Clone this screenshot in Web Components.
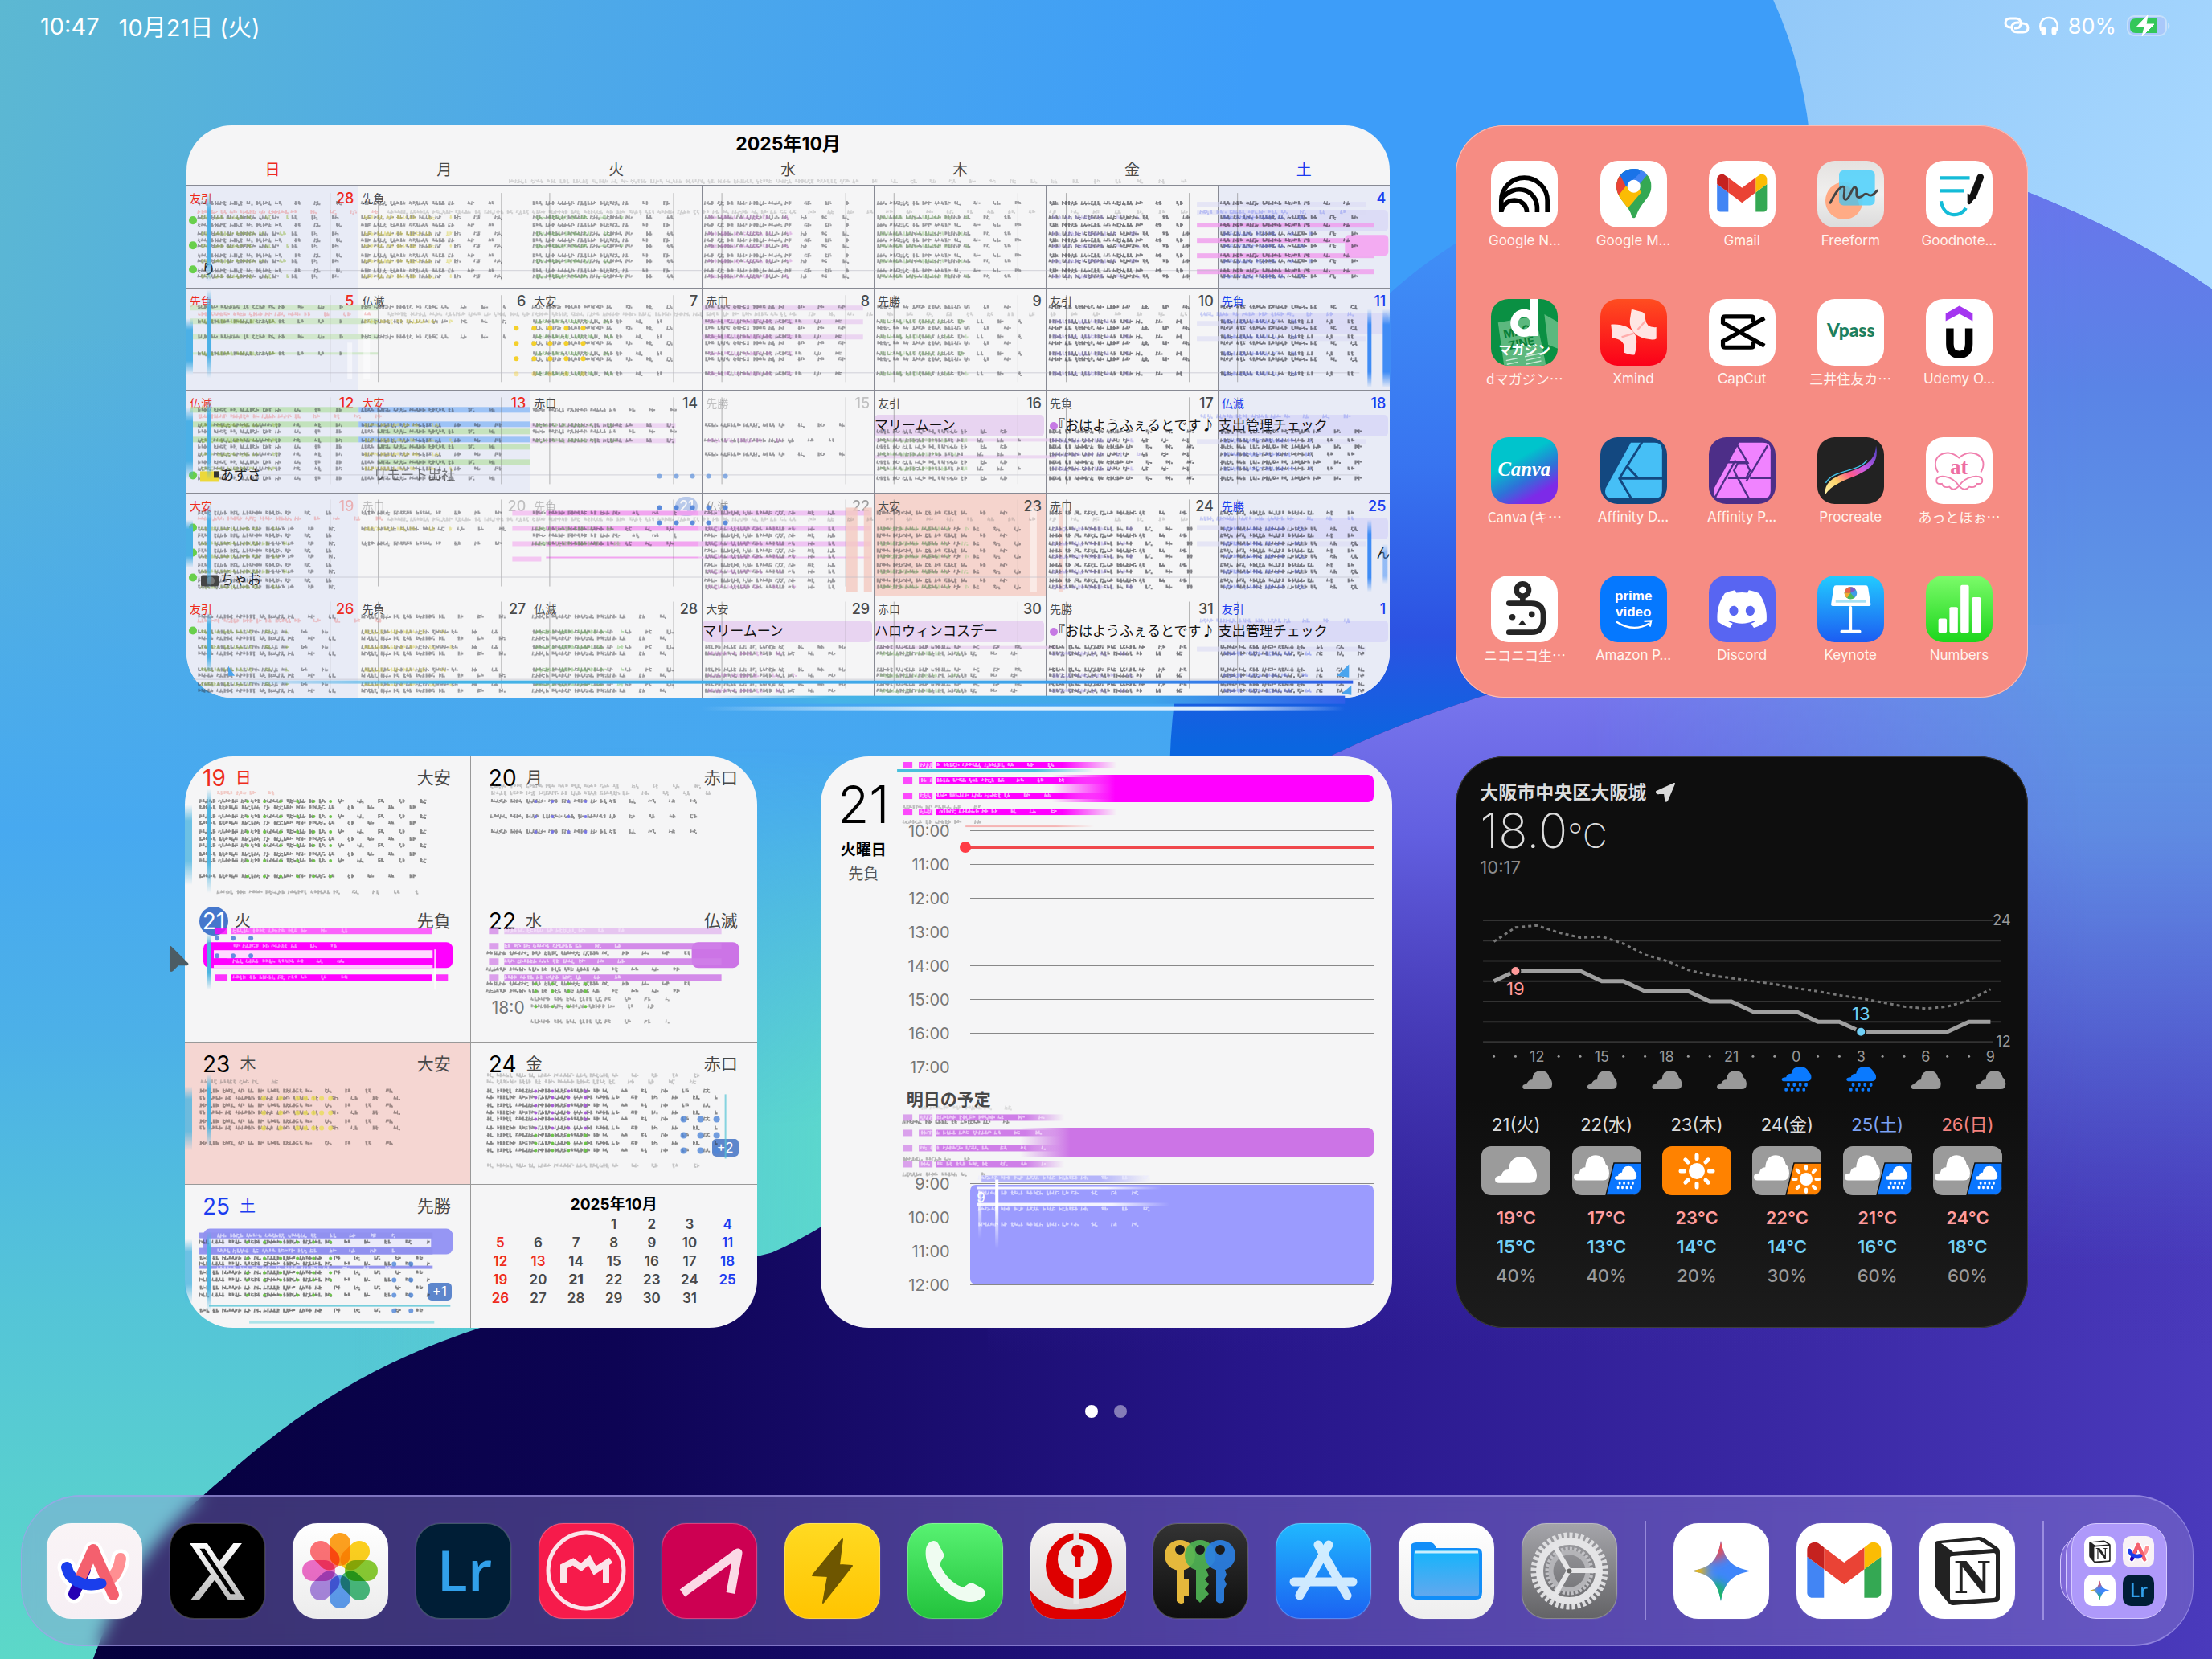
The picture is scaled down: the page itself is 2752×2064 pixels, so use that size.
<!DOCTYPE html>
<html lang="ja">
<head>
<meta charset="utf-8">
<meta name="viewport" content="width=device-width, initial-scale=1">
<title>Home Screen</title>
<style>
	html, body { margin: 0; height: 100%; }
	body {
		font-family: Inter, "Noto Sans CJK JP", sans-serif;
		color: #fff;
		background: #2c1a8a;
	}
</style>
</head>
<body>
<home-screen></home-screen>

<script>
// attach an open shadow root and fill it from a template
function shadow(host, html) {
	const template = document.createElement('template');
	template.innerHTML = html;
	const root = host.attachShadow({mode: 'open'});
	root.appendChild(template.content.cloneNode(true));
	return root;
}

// small seeded generator, so that the marks are the same on each load
function seeded(seed) {
	return () => {
		seed = (seed * 1664525 + 1013904223) % 4294967296;
		return seed / 4294967296;
	};
}

/* ---------- smudged lines ---------- */

// one smudged line of writing: dense at the start, thinner to the end
function smudge(rand, x0, x1, y) {
	let d = '';
	let x = x0;
	while (x < x1) {
		const t = (x - x0) / (x1 - x0);
		const count = t < 0.5 ? 2 + Math.floor(rand() * 5) : 2;
		for (let i = 0; i < count && x < x1; i++) {
			// one upright, one level and one loose stroke for each letter
			const a = (x + rand()).toFixed(1);
			const b = (x + rand()).toFixed(1);
			const c = (x + 1 + rand() * 2).toFixed(1);
			d += `M${a} ${y - 3}h${1 + Math.round(rand())}v${4 + Math.floor(rand() * 2)}h-2z`;
			d += `M${b} ${(y - 3 + rand() * 4).toFixed(1)}h3v1h-3z`;
			d += `M${c} ${(y - 2 + rand() * 3).toFixed(1)}h2v2h-2z`;
			x += 4;
		}
		x += t < 0.5 ? 4 : 11 + t * 9;
	}
	return d;
}

function block(seed, x0, x1, ys, fill = '#333', opacity = 0.6) {
	// lines of one block repeat the same words
	const d = ys.map((y, i) => smudge(seeded(seed * 31 + (i % 2) * 7), x0, x1, y)).join('');
	return `<path d="${d}" fill="${fill}" opacity="${opacity}"/>`;
}

function bar(x, y, w, h, fill, opacity = 1, rx = 0) {
	return `<rect x="${x}" y="${y}" width="${w}" height="${h}" rx="${rx}" fill="${fill}" opacity="${opacity}"/>`;
}

function dots(xs, ys, r, fill, opacity = 1) {
	return ys.map(y => xs.map(x => `<circle cx="${x}" cy="${y}" r="${r}" fill="${fill}" opacity="${opacity}"/>`).join('')).join('');
}

/* ---------- icons ---------- */

const GMAIL = `
	<path fill="#4285f4" d="M58 108h14V74L52 59v43c0 3.32 2.69 6 6 6"/>
	<path fill="#34a853" d="M120 108h14c3.32 0 6-2.69 6-6V59l-20 15"/>
	<path fill="#fbbc04" d="M120 48v26l20-15v-8c0-7.42-8.47-11.65-14.4-7.2"/>
	<path fill="#ea4335" d="M72 74V48l24 18 24-18v26L96 92"/>
	<path fill="#c5221f" d="M52 51v8l20 15V48l-5.6-4.2c-5.94-4.45-14.4-.22-14.4 7.2"/>`;

const vertical = (a, b) => `linear-gradient(${a}, ${b})`;

// name: [viewBox size, tile background, drawing]
const ICONS = {
	notebook: [175, '#fff', `<g fill="none" stroke="#000" stroke-width="12"><path d="M27 135V105A60 60 0 0 1 148 105V135"/><path d="M29 99C60 58 121 73 121 125V135"/><path d="M27 132C38 90 94 98 94 135"/></g>`],
	maps: [175, '#fff', `<clipPath id="pin"><path d="M88 21A46 46 0 0 1 134 67C134 97 106 108 94 145Q88 157 82 145C78 120 42 100 42 67A46 46 0 0 1 88 21Z"/></clipPath>
		<g clip-path="url(#pin)"><path fill="#34a853" d="M30 10h120v150H30z"/><path fill="#fbbc04" d="M36 95L76 50 108 82 66 132z"/><path fill="#ea4335" d="M30 20L54 36 76 56 46 93 30 90z"/><path fill="#4285f4" d="M90 10h26l6 28-38 46-18-20z"/><path fill="#1a73e8" d="M52 10h50l2 22-36 36-18-33z"/></g><circle cx="88" cy="67" r="17" fill="#fff"/>`],
	gmail: [175, '#fff', `<g transform="translate(-56 -27) scale(1.49)">${GMAIL}</g>`],
	freeform: [175, 'linear-gradient(#e4e2e0, #f0efee 50%, #dcdcdc)', `<circle cx="70" cy="105" r="49" fill="#ffab85"/><rect x="57" y="25" width="94" height="92" rx="12" fill="#58d2fb" opacity=".92"/><path d="M57 65Q100 60 110 117H70Q57 117 57 105z" fill="#8b9aa0" opacity=".35"/><path d="M34 110C50 78 62 66 69 68C76 72 64 100 74 102C86 102 90 66 100 70C108 74 96 96 110 96C124 94 120 82 132 88C142 96 150 86 157 78" fill="none" stroke="#444" stroke-width="6" stroke-linecap="round"/>`],
	goodnotes: [175, '#fff', `<g fill="none" stroke="#14bcd8" stroke-width="9"><path d="M36 45H115M36 79H100M40 106C45 150 92 150 105 124"/></g><path d="M143 43L124 92" stroke="#111" stroke-width="18" stroke-linecap="round"/><path d="M109 86L132 94 116 114Q108 116 109 106z" fill="#111"/>`],
	dmagazine: [175, '#0a9043', `<g transform="rotate(-12 90 110)"><path fill="#5cb87e" d="M30 48L130 52V190H20z"/><g font-weight="700" font-size="30" fill="#0a8038"><text x="38" y="92">MAGA</text><text x="44" y="124">ZINE</text></g><path d="M30 150H60M30 160H60M80 150H120M80 160H120M80 170H120" stroke="#cde8d6" stroke-width="3"/></g><path d="M140 40L175 60V130L150 120z" fill="#5cb87e"/><circle cx="87" cy="63" r="26" fill="none" stroke="#fff" stroke-width="20"/><path d="M103 0H124V97H103z" fill="#fff"/><text x="88" y="146" font-size="34" font-weight="700" text-anchor="middle" fill="#fff">マガジン</text>`],
	xmind: [175, vertical('#ff4d20', '#fb0019'), `<g fill="#fff"><path d="M82 27L110 34Q118 36 118 52Q120 76 147 74V104Q142 108 132 106C100 104 74 86 78 52z" opacity=".88"/><path d="M28 67C60 64 94 78 95 108Q96 128 90 146Q80 148 61 140C68 116 54 104 32 103z" opacity=".88"/></g><path d="M98 80L118 58M56 100L88 90" stroke="#f77" stroke-width="5" opacity=".5"/>`],
	capcut: [175, '#fff', `<path d="M117 60V52Q117 46 111 46H43Q37 46 37 52V62L146 123M117 112V121Q117 127 111 127H43Q37 127 37 121V111L146 50" fill="none" stroke="#000" stroke-width="11"/>`],
	vpass: [175, '#fff', `<text x="88" y="100" font-family="Lato, sans-serif" font-size="48" font-weight="900" text-anchor="middle" fill="#1c8060">Vpass</text>`],
	udemy: [175, '#fff', `<path d="M52 38L88 18 123 38V58L88 39 52 58z" fill="#a435f0"/><path d="M63 77V118Q63 146 88 146Q113 146 113 118V77" fill="none" stroke="#000" stroke-width="20"/>`],
	canva: [175, 'linear-gradient(150deg, #00c4cc 35%, #2e72d8 60%, #7d2ae8 80%)', `<text x="87" y="102" font-family="'Liberation Serif', serif" font-style="italic" font-weight="700" font-size="52" text-anchor="middle" fill="#fff">Canva</text>`],
	designer: [175, '#134880', `<path d="M80 14H142Q162 14 162 34V140Q162 160 142 160H30Q8 158 14 134z" fill="#46bff6"/><path d="M110 12L50 108L82 162M50 108H164M70 76L98 106" fill="none" stroke="#134880" stroke-width="6"/>`],
	photo: [175, '#4d2e88', `<path d="M80 14H142Q162 14 162 34V140Q162 160 142 160H30Q8 158 14 134z" fill="#f083ff"/><path d="M73 18L104 70M154 22L98 116M12 166L70 60M44 66H98M108 107H164M68 92L106 162M50 107H76" fill="none" stroke="#4d2e88" stroke-width="5"/><path d="M76 68H98L108 87 98 107H76L66 87z" fill="#f083ff" stroke="#4d2e88" stroke-width="5"/>`],
	procreate: [175, '#222', `<linearGradient id="g" x1="0" y1="1" x2="1" y2="0"><stop offset="0" stop-color="#fff6b0"/><stop offset=".25" stop-color="#fdd36a"/><stop offset=".45" stop-color="#ff5a8a"/><stop offset=".65" stop-color="#c85be8"/><stop offset="1" stop-color="#4a3fc0"/></linearGradient><path d="M20 152C14 74 150 110 154 22C172 110 50 96 20 152z" fill="url(#g)"/><path d="M22 120C40 84 110 92 130 60" fill="none" stroke="#3fc0e8" stroke-width="3"/>`],
	atto: [175, '#fff', `<g fill="none" stroke="#f07fae" stroke-width="4"><path d="M32 92C8 55 50 22 87 54C124 22 168 55 144 92"/><path d="M87 128C70 100 30 96 28 112Q26 124 42 122Q46 134 62 130Q72 144 87 128C104 100 146 96 148 112Q150 124 134 122Q130 134 114 130Q102 144 87 128z"/></g><text x="87" y="98" font-family="'Liberation Serif', serif" font-weight="700" font-size="56" text-anchor="middle" fill="#ee6ea2">at</text>`],
	niconico: [175, '#fff', `<g fill="none" stroke="#252525" stroke-width="14"><circle cx="83" cy="38" r="16"/><path d="M83 54V72"/><path d="M47 73H106Q137 73 137 104V116Q137 149 106 149H47" stroke-linecap="round"/></g><g fill="#252525"><circle cx="56" cy="109" r="8"/><circle cx="107" cy="102" r="8"/><path d="M82 116L92 129H72z"/></g>`],
	prime: [175, '#0578ff', `<g font-family="'Liberation Sans', sans-serif" font-weight="700" font-size="36" text-anchor="middle" fill="#fff"><text x="87" y="65">prime</text><text x="87" y="107">video</text></g><path d="M42 121Q86 150 128 126M115 120L133 119 130 134" fill="none" stroke="#fff" stroke-width="5"/>`],
	discord: [175, '#5865f2', `<path transform="translate(22 23) scale(5.4)" fill="#fff" d="M20.317 4.37a19.79 19.79 0 00-4.885-1.515.074.074 0 00-.079.037c-.21.375-.444.865-.608 1.25-1.845-.276-3.68-.276-5.487 0-.164-.394-.406-.875-.618-1.25a.077.077 0 00-.078-.037 19.736 19.736 0 00-4.885 1.515.07.07 0 00-.033.028C.533 9.046-.319 13.58.1 18.058a.082.082 0 00.031.056c2.053 1.508 4.041 2.423 5.993 3.03a.078.078 0 00.084-.028c.462-.63.873-1.295 1.226-1.994a.076.076 0 00-.042-.106c-.652-.248-1.274-.55-1.872-.892a.077.077 0 01-.007-.128c.126-.094.252-.192.372-.291a.074.074 0 01.077-.01c3.928 1.793 8.18 1.793 12.061 0a.074.074 0 01.079.009c.12.1.246.198.373.293a.077.077 0 01-.007.127 12.3 12.3 0 01-1.873.892.077.077 0 00-.04.106c.36.698.772 1.363 1.225 1.993a.076.076 0 00.084.029c1.961-.607 3.95-1.522 6.002-3.03a.077.077 0 00.032-.055c.5-5.177-.839-9.674-3.549-13.66a.061.061 0 00-.031-.029zM8.02 15.331c-1.183 0-2.157-1.086-2.157-2.419 0-1.333.956-2.419 2.157-2.419 1.21 0 2.176 1.095 2.157 2.419 0 1.333-.956 2.419-2.157 2.419zm7.975 0c-1.183 0-2.157-1.086-2.157-2.419 0-1.333.955-2.419 2.157-2.419 1.21 0 2.176 1.095 2.157 2.419 0 1.333-.946 2.419-2.157 2.419z"/>`],
	keynote: [175, vertical('#22ccff', '#1c5cf2'), `<path d="M49 26H127Q132 26 133 31L140 76Q140 80 136 80H40Q36 80 36 76L43 31Q44 26 49 26z" fill="#fff"/><path d="M48 68H128" stroke="#a8e2f4" stroke-width="6"/><path d="M87 84V145M64 147H111" stroke="#fff" stroke-width="8" stroke-linecap="round"/><circle cx="87" cy="46" r="16" fill="#4cb85c"/><path d="M87 46V30A16 16 0 0 1 101 38z" fill="#7a5ac8"/><path d="M87 46V30A16 16 0 0 0 71 46z" fill="#e8634a"/><path d="M87 46L101 38A16 16 0 0 1 98 58z" fill="#3f9ce8"/><path d="M87 46H71A16 16 0 0 0 78 59z" fill="#f0a830"/>`],
	numbers: [175, vertical('#7cfb6a', '#1cd61c'), `<g fill="#fff"><rect x="33" y="113" width="22" height="37" rx="4"/><rect x="62" y="83" width="22" height="67" rx="4"/><rect x="91" y="25" width="22" height="125" rx="4"/><rect x="121" y="57" width="23" height="93" rx="4"/></g>`],

	arc: [119, vertical('#faf4f6', '#f6eff4'), `<g fill="none" stroke-linecap="round" stroke-linejoin="round"><path d="M34 88L58 34L83 89M25 55C30 85 86 85 92 44" stroke="#fff" stroke-width="23"/><path d="M34 88L48 58" stroke="#2500b4" stroke-width="14"/><path d="M60 76Q88 74 92 44" stroke="#ff8f92" stroke-width="14"/><path d="M25 55C28 70 44 80 66 75" stroke="#1a3eec" stroke-width="14"/><path d="M44 64L58 33L83 89" stroke="#f4606e" stroke-width="14"/><path d="M38 72Q52 80 68 75" stroke="#1a3eec" stroke-width="13"/></g>`],
	x: [119, '#000', `<linearGradient id="g" x2="0" y2="1"><stop stop-color="#fff"/><stop offset="1" stop-color="#bbb"/></linearGradient><path transform="translate(21 17) scale(3.2 3.6)" fill="url(#g)" d="M18.244 2.25h3.308l-7.227 8.26 8.502 11.24H16.17l-5.214-6.817L4.99 21.75H1.68l7.73-8.835L1.254 2.25H8.08l4.713 6.231zm-1.161 17.52h1.833L7.084 4.126H5.117z"/>`],
	photos: [119, vertical('#fff', '#ececec'), ['#ff9500', '#ffcc00', '#7ac818', '#2fb46c', '#4a94f4', '#a27ae0', '#f05cc4', '#ff5f64'].map((c, i) => `<rect x="46" y="12" width="26" height="41" rx="13" fill="${c}" opacity=".88" style="mix-blend-mode:multiply" transform="rotate(${i * 45} 59 59)"/>`).join('')],
	lightroom: [119, '#001e36', `<text x="61" y="85" font-family="'Open Sans', sans-serif" font-weight="600" font-size="70" text-anchor="middle" fill="#31a0ea">Lr</text>`],
	meetup: [119, '#f61b4b', `<g fill="none" stroke="#fbe4ea"><circle cx="59" cy="59" r="47" stroke-width="5"/><path d="M31 74V54L43 48L53 55L63 46L70 59L90 46M84 52V74" stroke-width="8"/></g>`],
	slope: [119, '#cd0052', `<path d="M26 87L95 37L86 87" fill="none" stroke="#fbd9e6" stroke-width="11" stroke-linejoin="round"/>`],
	bolt: [119, vertical('#ffda22', '#ffc400'), `<path d="M72 20L68 52 84 53 48 99 54 66 35 65z" fill="#6e5600" stroke="#6e5600" stroke-width="2" stroke-linejoin="round"/>`],
	phone: [119, vertical('#58f272', '#22c23c'), `<path d="M23 32C25 22 34 19 38 25L45 38C47 44 39 47 41 53C46 64 56 75 67 79C73 81 75 72 82 75L93 81C99 85 97 91 92 94C66 112 18 66 23 32z" fill="#effcf1"/>`],
	lock: [119, vertical('#f6f4f4', '#d9d6d6'), `<path d="M0 84C30 122 90 108 119 84V119H0z" fill="#de0000"/><circle cx="60" cy="53" r="41" fill="#de0000"/><circle cx="59" cy="45" r="25" fill="#ecebeb"/><path d="M57 8V25M57 68V100" stroke="#e8e6e6" stroke-width="7"/><circle cx="59" cy="35" r="8" fill="#de0000"/><path d="M59 38V54" stroke="#de0000" stroke-width="7"/>`],
	keys: [119, vertical('#333', '#0e0e0e'), `<g fill="#e5b83c"><circle cx="34" cy="40" r="19"/><path d="M30 55H39V70H45V90H39V99Q34 102 30 97z"/></g><g fill="#50b454" opacity=".92"><circle cx="59" cy="40" r="19"/><path d="M54 55H65L70 65 65 70 70 76 65 82 70 88 59 99 54 94z"/></g><g fill="#2c80e4" opacity=".92"><circle cx="84" cy="40" r="19"/><path d="M79 55H89L92 64 89 70 92 76 89 82V97Q84 102 79 97z"/></g><g fill="#1c1c1c"><circle cx="34" cy="33" r="6"/><circle cx="59" cy="33" r="6"/><circle cx="84" cy="33" r="6"/></g>`],
	appstore: [119, vertical('#20b8fe', '#1b62f2'), `<g stroke="#e4f5ff" stroke-width="11" stroke-linecap="round" opacity=".9"><path d="M66 27L30 90"/><path d="M53 27L89 90"/><path d="M23 73H96"/></g>`],
	files: [119, vertical('#fff', '#eee'), `<linearGradient id="g" x2="0" y2="1"><stop stop-color="#14b4fc"/><stop offset="1" stop-color="#62a8ee"/></linearGradient><path d="M15 30Q15 24 22 24H40Q44 24 47 31H97Q104 31 104 38V86Q104 95 96 95H23Q15 95 15 86z" fill="#128ef8"/><rect x="19" y="34" width="81" height="57" rx="4" fill="url(#g)"/><path d="M20 36H99" stroke="#c9eefe" stroke-width="3"/>`],
	settings: [119, vertical('#a5a5aa', '#636366'), `<g fill="none"><circle cx="59.5" cy="59.5" r="44" stroke="#dedee0" stroke-width="8" stroke-dasharray="4 2.9"/><circle cx="59.5" cy="59.5" r="37" stroke="#e4e4e6" stroke-width="9"/><circle cx="59.5" cy="59.5" r="27" stroke="#c2c2c6" stroke-width="6" stroke-dasharray="3 2.3"/><circle cx="59.5" cy="59.5" r="23" stroke="#b4b4b8" stroke-width="6"/><path d="M59 59H97M59 59L40 27M59 59L40 92" stroke="#e6e6e8" stroke-width="6"/></g><circle cx="59.5" cy="59.5" r="3" fill="#666"/>`],
	gemini: [119, '#fff', `<filter id="b" x="-1" y="-1" width="3" height="3"><feGaussianBlur stdDeviation="7"/></filter><clipPath id="c"><path d="M59 22C63 46 74 56 97 59.5C74 63 63 74 59 97C55 74 46 63 22 59.5C46 56 55 46 59 22z"/></clipPath><g clip-path="url(#c)"><path fill="#3f86fb" d="M0 0h119v119H0z"/><g filter="url(#b)"><circle cx="50" cy="26" r="20" fill="#f4494c"/><circle cx="24" cy="60" r="16" fill="#fbbc04"/><circle cx="50" cy="92" r="19" fill="#18b95c"/></g></g>`],
	gmaildock: [119, '#fff', `<g transform="translate(-41 -20) scale(1.045)">${GMAIL}</g>`],
	notion: [119, '#fff', `<path d="M19 26Q19 22 24 22L74 17Q78 17 81 19L97 30Q100 32 100 36V93Q100 98 95 98L42 102Q38 102 35 98L21 81Q19 78 19 74z" fill="#222"/><path d="M27 25L74 21 92 32 42 36z" fill="#fff"/><path d="M38 43Q38 41 41 41L92 37Q95 37 95 40V90Q95 93 92 93L41 96Q38 96 38 93z" fill="#fff"/><text x="66" y="87" font-family="'Liberation Serif', serif" font-weight="700" font-size="62" text-anchor="middle" fill="#222">N</text>`],
};

class AppIcon extends HTMLElement {
	constructor() {
		super();
		this.root = shadow(this, `
			<style>
			:host { display: block; width: 100%; aspect-ratio: 1; }
			svg {
				display: block;
				width: 100%;
				height: 100%;
				border-radius: 26%;
				font-family: Inter, "Noto Sans CJK JP", sans-serif;
			}
			:host([glass]) svg { box-shadow: inset 0 0 0 1px rgba(255,255,255,.25), 0 0 2px rgba(255,255,255,.2); }
			</style>
			<svg aria-hidden="true"></svg>
		`);
	}

	connectedCallback() {
		const [size, background, art] = ICONS[this.getAttribute('name')];
		const svg = this.root.querySelector('svg');
		svg.setAttribute('viewBox', `0 0 ${size} ${size}`);
		svg.style.background = background;
		svg.innerHTML = art;
	}
}
customElements.define('app-icon', AppIcon);

/* ---------- wallpaper ---------- */

class WallPaper extends HTMLElement {
	constructor() {
		super();
		const orb = 'M829 560C828 400 900 270 985 208C1100 105 1280 80 1437 136Q1510 165 1568 205V620H829z';
		shadow(this, `
			<style>
			:host { position: absolute; inset: 0; overflow: hidden; }
			svg { display: block; width: 100%; height: 100%; }
			</style>
			<svg viewBox="0 0 1568 1176" preserveAspectRatio="none" aria-hidden="true">
				<defs>
					<linearGradient id="sky" x1="0" y1="0" x2=".55" y2=".12"><stop stop-color="#5cb8d2"/><stop offset=".45" stop-color="#4ea9e8"/><stop offset="1" stop-color="#3d9df9"/></linearGradient>
					<linearGradient id="teal" x1="0" y1="0" x2="0" y2="1"><stop offset=".2" stop-color="#47a9f0" stop-opacity="0"/><stop offset=".5" stop-color="#47a9f0"/><stop offset=".62" stop-color="#4cb0e8"/><stop offset=".78" stop-color="#54c4d8"/><stop offset="1" stop-color="#5cd8c8"/></linearGradient>
					<linearGradient id="aqua" x1="250" y1="0" x2="600" y2="0" gradientUnits="userSpaceOnUse"><stop stop-color="#5cd8cc" stop-opacity="0"/><stop offset="1" stop-color="#5cd8cc"/></linearGradient>
					<linearGradient id="aquafade" x2="0" y2="1"><stop stop-color="#000"/><stop offset="1" stop-color="#fff"/></linearGradient>
					<mask id="low"><rect y="530" width="700" height="270" fill="url(#aquafade)"/><rect y="800" width="700" height="376" fill="#fff"/></mask>
					<linearGradient id="pale" x2="1" y2=".6"><stop stop-color="#92c8f8"/><stop offset="1" stop-color="#a8d8ff"/></linearGradient>
					<linearGradient id="orb" x1="0" y1="130" x2="0" y2="530" gradientUnits="userSpaceOnUse"><stop stop-color="#4296f8"/><stop offset=".5" stop-color="#3874f0"/><stop offset=".8" stop-color="#2c52e2"/><stop offset="1" stop-color="#0a66e0"/></linearGradient>
					<linearGradient id="east" x1="0" y1="118" x2="0" y2="900" gradientUnits="userSpaceOnUse"><stop stop-color="#6a74ec"/><stop offset=".2" stop-color="#5a84e6"/><stop offset=".45" stop-color="#5f98e6"/><stop offset=".6" stop-color="#5f90e2" stop-opacity=".9"/><stop offset="1" stop-color="#5070d8" stop-opacity="0"/></linearGradient>
					<linearGradient id="across" x1="1120" y1="0" x2="1480" y2="0" gradientUnits="userSpaceOnUse"><stop stop-color="#000"/><stop offset="1" stop-color="#fff"/></linearGradient>
					<mask id="side"><rect width="1568" height="1176" fill="url(#across)"/></mask>
					<linearGradient id="dark" x1="60" y1="0" x2="1568" y2="0" gradientUnits="userSpaceOnUse"><stop stop-color="#05003c"/><stop offset=".25" stop-color="#0d0454"/><stop offset=".55" stop-color="#27168a"/><stop offset=".8" stop-color="#3a28a4"/><stop offset="1" stop-color="#4a3abc"/></linearGradient>
					<linearGradient id="lilac" x1="0" y1="470" x2="0" y2="960" gradientUnits="userSpaceOnUse"><stop stop-color="#7c7af0"/><stop offset=".25" stop-color="#625fe0"/><stop offset="1" stop-color="#4030b0" stop-opacity="0"/></linearGradient>
				</defs>
				<rect width="1568" height="1176" fill="url(#sky)"/>
				<rect width="1000" height="1176" fill="url(#teal)"/>
				<rect width="700" height="1176" fill="url(#aqua)" mask="url(#low)"/>
				<path d="M1257 0Q1280 50 1284 110L1400 260H1568V0z" fill="url(#pale)"/>
				<path d="${orb}" fill="url(#orb)"/>
				<path d="M1300 100C1350 108 1400 120 1437 136Q1510 165 1568 205V620H1300z" fill="#6274ea"/>
				<path d="M66 1176C90 1110 120 1080 158 1048C200 1010 250 975 313 951C390 922 470 908 547 888C700 820 760 640 945 535Q1060 480 1200 460Q1400 440 1568 440V1176z" fill="url(#dark)"/>
				<path d="M700 740C770 650 840 590 945 535Q1060 480 1200 460Q1400 440 1568 440V960H700z" fill="url(#lilac)"/>
				<path d="M1120 100C1280 90 1350 105 1437 136Q1510 165 1568 205V900H1120z" fill="url(#east)" mask="url(#side)"/>
			</svg>
		`);
	}
}
customElements.define('wall-paper', WallPaper);

/* ---------- status bar ---------- */

class StatusBar extends HTMLElement {
	constructor() {
		super();
		shadow(this, `
			<style>
			:host {
				display: flex;
				justify-content: space-between;
				align-items: center;
				height: 64px;
				padding: 0 52px 0 50px;
				font-weight: 400;
			}
			div { display: flex; align-items: center; gap: 12px; font-size: 27px; }
			div:first-of-type { gap: 24px; font-size: 29px; }
			svg { display: block; }
			</style>
			<div><time>10:47</time><span>10月21日 (火)</span></div>
			<div>
				<svg width="32" height="22" viewBox="0 0 32 22" fill="none" stroke="#fff" stroke-width="3" role="img" aria-label="link"><path d="M9 13C3 13 2 10 2 7.500Q2 2 8 2H15Q21 2 21 8Q21 14 15 14H13"/><path d="M23 8C29 8 30 11 30 13.500Q30 19 24 19H17Q10 19 10 13Q10 7 17 7H19"/></svg>
				<svg width="24" height="24" viewBox="0 0 24 24" fill="none" stroke="#fff" role="img" aria-label="headphones"><path d="M2.500 18C-1 9 4 2 12 2S25 9 21.500 18" stroke-width="2.500"/><path d="M5.500 16.500V20.500M18.500 16.500V20.500" stroke-width="6" stroke-linecap="round"/></svg>
				<span>80%</span>
				<svg width="55" height="28" viewBox="0 0 55 28" role="img" aria-label="battery charging"><rect x="2" y="2" width="48" height="24" rx="8" fill="#a9c8fa" stroke="#c6e0fb" stroke-width="2"/><path d="M5 12Q5 5 12 5H38V23H12Q5 23 5 16z" fill="#34c759"/><path d="M52 10Q57 14 52 18z" fill="#c6e0fb"/><path d="M27 1L13 15.500H23L20 27 35 12H25z" fill="#fff" stroke="#fff" stroke-width="1" stroke-linejoin="round"/></svg>
			</div>
		`);
	}
}
customElements.define('status-bar', StatusBar);

/* ---------- month calendar ---------- */

// [name of day, number, opacity, event colour, event text]
const WEEKS = [
	[['友引', 28], ['先負', ''], ['', ''], ['', ''], ['', ''], ['', ''], ['', 4, 1, '#dcdcf6']],
	[['先負', 5], ['仏滅', 6], ['大安', 7], ['赤口', 8], ['先勝', 9], ['友引', 10], ['先負', 11, 1, '#dcdcf6']],
	[['仏滅', 12], ['大安', 13], ['赤口', 14], ['先勝', 15, .3], ['友引', 16, 1, '#e8d4f1', 'マリームーン'], ['先負', 17, 1, '', '『おはようふぇるとです♪'], ['仏滅', 18, 1, '#dadaf7', '支出管理チェック']],
	[['大安', 19, .3], ['赤口', 20, .3], ['先負', 21, .3], ['仏滅', 22, .5], ['大安', 23], ['赤口', 24], ['先勝', 25, 1, '#dadaf7']],
	[['友引', 26], ['先負', 27], ['仏滅', 28], ['大安', 29, 1, '#e8d4f1', 'マリームーン'], ['赤口', 30, 1, '#e8d4f1', 'ハロウィンコスデー'], ['先勝', 31, 1, '', '『おはようふぇるとです♪'], ['友引', 1, 1, '#dadaf7', '支出管理チェック']],
];

// heights of the smudged lines in each week
const LINES = [
	[97, 115, 124, 135, 143, 150, 162, 169, 181, 188],
	[226, 244, 252, 263, 271, 284, 291, 309],
	[354, 373, 381, 392, 400, 409, 419, 427, 439],
	[482, 502, 510, 520, 529, 536, 547, 555, 566, 574],
	[611, 630, 638, 649, 657, 677, 684, 695, 703],
];

function monthMarks() {
	const col = 1496 / 7;
	const week = 127;
	let art = '';

	// coloured bands
	for (const y of [223, 240, 259, 282]) art += bar(4, y, 234, y === 282 ? 3 : 7, '#cde6c4', .85);
	for (const y of [350, 368, 387]) art += bar(4, y, 210, 7, '#b8e0ae', .8) + bar(214, y, 213, 7, '#8fbcf6', .85);
	for (const y of [377, 396, 415]) art += bar(238, y, 189, 7, '#bfe2b4', .85);
	for (const y of [370, 389]) art += bar(428, y, 180, 6, '#ecd2f2', .9);
	for (const y of [224, 241, 260]) art += bar(641, y, 200, 6, '#e8cdf0', .8);
	for (const y of [479, 498, 517, 536]) {
		art += bar(447, y, 190, y === 536 ? 2 : 6, '#f29cf0', .9);
		art += bar(637, y, 214, y === 536 ? 2 : 6, '#eeb8f2', .8);
		art += bar(405, y, 36, 6, '#f4a8f0', .6);
	}
	for (const y of [389, 410, 647]) art += bar(855, y, 226, 4, '#e8ccf0', .7);
	for (const y of [121, 140, 159, 179]) art += bar(1256, y, 220, 6, '#f09bee', .8);
	art += bar(1440, 136, 54, 26, '#f3abf2', 1, 5);
	for (const y of [95, 105, 243, 262, 390, 497, 517, 648]) art += bar(1256, y, 210, 6, '#dadaf5', .6);
	art += bar(820, 475, 14, 105, '#f4c9c0', .8) + bar(842, 475, 10, 105, '#f4c9c0', .8);
	art += bar(1084, 475, 6, 105, '#f5d4cd', .9) + bar(1049, 475, 8, 105, '#fff', .5);
	art += bar(200, 270, 6, 45, '#fff', .5) + bar(220, 230, 8, 85, '#fff', .5);

	// ghosts of the column rules
	for (let c = 1; c < 7; c++) {
		for (let w = 0; w < 5; w++) {
			art += bar(Math.round(c * col - 36), 84 + w * week, 1, 108, '#777', .55);
			art += bar(Math.round(c * col + 24), 84 + w * week, 1, 108, '#777', .55);
		}
	}
	for (let w = 0; w < 5; w++) art += bar(8, 180 + w * week, 1450, 1, '#b9b9c4', .6);

	// smudged writing, cell by cell
	for (let w = 0; w < 5; w++) {
		for (let c = 0; c < 7; c++) {
			let ys = LINES[w];
			if (c === 1 && (w === 1 || w === 3)) ys = ys.filter((y, i) => [0, 1, 3].includes(i));
			if (c === 0 && w === 1) ys = ys.filter((y, i) => [0, 1, 3, 5].includes(i));
			if (c === 2 && w > 1 && w < 4) ys = ys.slice(0, 4);
			if (c === 3 && w === 2) ys = ys.filter((y, i) => [1, 3, 5].includes(i));
			if (c > 3 && w === 2) ys = ys.slice(2);
			if (c > 2 && w === 4) ys = ys.slice(3);
			const x0 = Math.round(c * col + (c ? 3 : 14));
			art += block(w * 7 + c + 3, x0, x0 + 178, ys, '#303038', c > 4 ? .6 : .45);
			const tint = ['#8fb23a', '#d8cf3c', '#6fb85a', '#c77ad0', '#8fc47a', '#9a8ae0', '#5a6ae8'][c];
			art += block(w * 11 + c + 5, x0 + 4, x0 + 110, ys.filter((y, i) => i % 2), tint, .45);
		}
		art += block(w + 91, 14, 240, [108 + w * week], '#e86a6a', .35);
		art += block(w + 97, 1260, 1460, [108 + w * week], '#5a6af0', .3);
	}
	art += block(141, 400, 1250, [70], '#777', .25) + block(142, 250, 1240, [108, 235, 490], '#666', .25);
	for (const y of [252, 271, 290, 309]) art += dots([410, 432, 452, 472, 493], [y], 3, '#f4d02c', y === 309 ? .4 : 1);
	for (const y of [475, 494]) art += dots([588, 609, 629, 649, 670], [y], 3, '#4a80d8', .9);
	art += dots([588, 609, 629, 649, 670], [436], 3, '#5a8edc', .7);

	// events still to be seen in the first column
	art += dots([8], [118, 149, 179, 435, 500, 531, 562, 628], 5, '#68cf4c');
	art += bar(17, 430, 24, 13, '#ecd83a') + bar(34, 430, 6, 8, '#333');
	art += bar(18, 559, 22, 14, '#444', 1, 2) + '<circle cx="30" cy="566" r="5" fill="#777"/>';
	art += `<g font-size="17" fill="#222"><text x="19" y="185">り</text><text x="42" y="441">あずさ</text><text x="42" y="570">ちゃお</text><text x="232" y="441" opacity=".55">リモート出社</text><text x="1479" y="538">ん</text></g>`;

	// pieces of the wallpaper dragged over the edge
	for (const [y, h] of [[84, 110], [204, 110], [340, 100], [470, 105], [605, 75]]) art += bar(26, y, 5, h, 'url(#left)');
	for (const [y, h] of [[240, 70], [350, 90], [490, 60]]) art += bar(0, y, 8, h, 'url(#left)');
	art += bar(1468, 228, 5, 98, 'url(#right)') + bar(1487, 228, 10, 98, 'url(#right)');
	art += bar(1468, 490, 5, 90, 'url(#right)') + bar(1487, 520, 6, 50, 'url(#right)', .5);
	art += bar(40, 690, 1410, 4, 'url(#foot)') + bar(640, 709, 800, 10, 'url(#foot)') + bar(640, 722, 800, 5, 'url(#haze)');
	art += '<path d="M52 672v12h8zM1430 684l15-14v16zM1436 706l12-10v12z" fill="#4aa4ee"/>';
	return `<defs>
		<linearGradient id="left" x2="0" y2="1"><stop stop-color="#4bb0e6" stop-opacity="0"/><stop offset=".2" stop-color="#4bb0e6"/><stop offset=".75" stop-color="#4bb0e6"/><stop offset="1" stop-color="#4bb0e6" stop-opacity="0"/></linearGradient>
		<linearGradient id="right" x2="0" y2="1"><stop stop-color="#3f8cf5" stop-opacity="0"/><stop offset=".2" stop-color="#3f8cf5"/><stop offset=".8" stop-color="#3f8cf5"/><stop offset="1" stop-color="#3f8cf5" stop-opacity="0"/></linearGradient>
		<linearGradient id="foot"><stop stop-color="#46a8ea" stop-opacity="0"/><stop offset=".2" stop-color="#46b4e6"/><stop offset=".7" stop-color="#3fa4ea"/><stop offset="1" stop-color="#2f5ee8"/></linearGradient>
		<linearGradient id="haze"><stop stop-color="#fff" stop-opacity="0"/><stop offset=".4" stop-color="#dff0fc"/><stop offset=".8" stop-color="#dff0fc"/><stop offset="1" stop-color="#fff" stop-opacity="0"/></linearGradient>
	</defs>${art}`;
}

class MonthCalendar extends HTMLElement {
	constructor() {
		super();
		const names = ['日', '月', '火', '水', '木', '金', '土'];
		const cell = ([name, number, opacity = 1, color = '', text = '']) => {
			const day = number === 21 ? '<b class="today">21</b>' : number;
			const dot = text && !color ? '<i></i>' : '';
			const event = color || text ? `<p style="background:${color || 'none'}">${dot}${text}</p>` : '';
			return `<td><div class="top"><span style="opacity:${number === 19 ? 1 : opacity}">${name}</span><span class="num" style="opacity:${opacity}">${day}</span></div>${event}</td>`;
		};
		shadow(this, `
			<style>
			:host {
				display: flex;
				flex-direction: column;
				position: relative;
				border-radius: 56px;
				background: #f5f5f6;
				color: #4a4a4a;
			}
			h2 {
				margin: 0;
				padding-top: 8px;
				font-size: 23px;
				line-height: 30px;
				font-weight: 700;
				text-align: center;
				color: #000;
			}
			.sheet {
				flex: 1;
				min-height: 0;
				display: flex;
				overflow: hidden;
				border-radius: 0 0 56px 56px;
			}
			table { flex: 1; width: 100%; height: 100%; border-collapse: collapse; table-layout: fixed; }
			th { height: 36px; padding: 0; font-size: 19px; line-height: 36px; font-weight: 400; vertical-align: top; }
			td { padding: 0; vertical-align: top; border-top: 1px solid #888a94; border-left: 1px solid #888a94; }
			td:first-child { border-left: 0; }
			th:first-child, td:first-child { color: #ee2c1c; }
			th:last-child, td:last-child { color: #1a3cf0; }
			td:first-child, td:last-child { background: #e8ebf6; }
			tr:nth-child(3) td:nth-child(2) { background: #e8ebf6; color: #ee2c1c; }
			tr:nth-child(4) td:nth-child(5) { background: #f5d4cd; }
			.top {
				display: flex;
				justify-content: space-between;
				padding: 4px 5px 0 4px;
				font-size: 14px;
				line-height: 24px;
			}
			.num { font-size: 18px; font-weight: 500; }
			.today {
				display: block;
				width: 28px;
				border-radius: 14px;
				background: #2f66d0;
				color: #fff;
				text-align: center;
				font-weight: 500;
			}
			p {
				margin: 2px 2px 0 0;
				height: 27px;
				border-radius: 5px;
				font-size: 17px;
				line-height: 27px;
				color: #111;
				white-space: nowrap;
				overflow: hidden;
			}
			i {
				display: inline-block;
				width: 10px;
				height: 10px;
				margin: 0 -8px 0 4px;
				border-radius: 5px;
				background: #c679e4;
			}
			svg { position: absolute; left: 0; top: 0; width: 100%; height: 100%; overflow: visible; }
			</style>
			<h2>2025年10月</h2>
			<div class="sheet">
				<table>
					<thead><tr>${names.map(n => `<th scope="col">${n}</th>`).join('')}</tr></thead>
					<tbody>${WEEKS.map(w => `<tr>${w.map(cell).join('')}</tr>`).join('')}</tbody>
				</table>
			</div>
			<svg viewBox="0 0 1496 711" aria-hidden="true">${monthMarks()}</svg>
		`);
	}
}
customElements.define('month-calendar', MonthCalendar);

/* ---------- folder of apps ---------- */

const APPS = [
	['notebook', 'Google N…'], ['maps', 'Google M…'], ['gmail', 'Gmail'], ['freeform', 'Freeform'], ['goodnotes', 'Goodnote…'],
	['dmagazine', 'dマガジン…', 'ja'], ['xmind', 'Xmind'], ['capcut', 'CapCut'], ['vpass', '三井住友カ…', 'ja'], ['udemy', 'Udemy O…'],
	['canva', 'Canva (キ…', 'ja'], ['designer', 'Affinity D…'], ['photo', 'Affinity P…'], ['procreate', 'Procreate'], ['atto', 'あっとほぉ…', 'ja'],
	['niconico', 'ニコニコ生…', 'ja'], ['prime', 'Amazon P…'], ['discord', 'Discord'], ['keynote', 'Keynote'], ['numbers', 'Numbers'],
];

class AppTile extends HTMLElement {
	constructor() {
		super();
		this.attachShadow({mode: 'open'});
	}

	connectedCallback() {
		this.shadowRoot.innerHTML = `
			<style>
			:host { display: block; }
			:host([lang=ja]) { font-family: "Noto Sans CJK JP", sans-serif; }
			button {
				display: flex;
				flex-direction: column;
				align-items: center;
				gap: 5px;
				width: 100%;
				padding: 0;
				border: 0;
				background: none;
				color: inherit;
				font: inherit;
				font-size: 17px;
				line-height: 22px;
				white-space: nowrap;
			}
			app-icon { width: 83px; }
			</style>
			<button type="button"><app-icon name="${this.getAttribute('icon')}"></app-icon><slot></slot></button>
		`;
	}
}
customElements.define('app-tile', AppTile);

class AppFolder extends HTMLElement {
	constructor() {
		super();
		shadow(this, `
			<style>
			:host {
				display: grid;
				box-sizing: border-box;
				grid-template-columns: repeat(5, 1fr);
				grid-auto-rows: 172px;
				padding: 44px 18px 0;
				border-radius: 60px;
				background: #f68c83;
				box-shadow: inset 0 0 0 1px #f9bfb8;
				color: #fff4ee;
				min-height: 0;
			}
			app-tile { height: 120px; }
			</style>
			${APPS.map(([icon, name, lang = 'en']) => `<app-tile lang="${lang}" icon="${icon}">${name}</app-tile>`).join('')}
		`);
	}
}
customElements.define('app-folder', AppFolder);

/* ---------- week calendar ---------- */

function weekMarks() {
	let art = '';
	const greens = [78, 99, 119, 140, 160, 181];

	// 19 and 20
	art += block(201, 18, 300, [56, 64, 75, 83, 94, 103, 111, 122, 130, 149], '#303030', .55);
	art += block(207, 40, 290, [169], '#555', .4) + block(209, 40, 120, [46], '#e86a5a', .3);
	art += dots(greens, [56, 75, 94, 111, 130, 149], 2, '#6fc44c');
	art += block(211, 380, 653, [56, 75, 94], '#303030', .5) + block(213, 380, 653, [37, 46], '#555', .3);
	art += dots([436, 457, 477, 498], [56, 75, 94], 2, '#7a78e8');

	// 21
	art += bar(23, 231, 310, 32, '#ff00ff', 1, 8) + bar(36, 241, 272, 10, '#fff', .85) + bar(36, 259, 272, 4, '#fff', .8);
	for (const y of [213, 232, 251, 271]) {
		art += bar(37, y, 16, 8, '#ff00ff', .8) + bar(57, y, 250, 8, '#ff00ff', y === 213 ? .6 : 1);
		art += block(y, 60, 200, [y + 4], '#ffd4ff', .6);
	}
	art += dots([40, 60, 82], [226, 248], 3, '#3f74d8', .8) + bar(310, 240, 2, 50, '#fff', .8) + bar(312, 271, 15, 8, '#ff00ff', .8);

	// 22
	art += bar(630, 231, 59, 32, '#cc74e6', 1, 8);
	for (const y of [213, 232, 251, 271]) {
		art += bar(378, y, 12, 8, '#d48ae8', .8) + bar(397, y, 270, 8, '#cf7ee8', y === 213 ? .4 : .9);
		art += block(y + 3, 397, 560, [y + 4], '#f4e0fa', .8);
	}
	art += block(221, 375, 630, [245, 265, 283, 292], '#303030', .5) + block(227, 430, 600, [302, 311, 330], '#303030', .4);
	art += dots([436, 457, 477, 498], [283, 292, 311], 2, '#6fc44c');

	// 23
	art += block(231, 18, 270, [416, 425, 434, 443, 454, 462, 481], '#463a38', .5) + block(233, 20, 130, [405], '#555', .35);
	art += dots([98, 119, 140, 150, 160, 170, 181], [425, 443, 462], 3, '#eadc5a', .8);

	// 24
	art += block(241, 375, 660, [416, 424, 434, 443, 451, 462, 471, 481, 490], '#303030', .55) + block(243, 375, 650, [397, 405, 509], '#555', .3);
	art += dots([436, 457, 477, 498], [416, 424, 434, 443, 451, 462], 2, '#a860d8') + dots([436, 457, 477, 498], [471, 481, 490], 2, '#6fc44c');
	art += dots([620, 641, 661], [451, 471, 490], 4, '#4f86d8', .8);

	// 25
	art += bar(23, 587, 310, 32, '#9696f4', 1, 8) + bar(30, 599, 276, 11, '#f4f4fb', .9);
	for (const [y, h] of [[592, 7], [611, 8], [633, 4]]) {
		art += bar(18, y, 290, h, '#9090ee', .95) + block(y, 40, 260, [y + 4], '#e8e8ff', .7);
	}
	art += block(251, 18, 305, [604, 624, 631, 642, 651, 661, 670, 689], '#303030', .6);
	art += dots(greens, [604, 624, 642, 651, 670], 2, '#6fc44c') + dots([260, 281], [631, 651, 670, 689], 3, '#4f86d8', .8);

	// wallpaper dragged over the edge
	for (const [y, h] of [[40, 130], [220, 70], [395, 90], [590, 100]]) art += bar(28, y, 4, h, 'url(#left)');
	for (const [y, h] of [[60, 100], [410, 80], [600, 80]]) art += bar(0, y, 9, h, 'url(#left)', .8);
	art += bar(30, 682, 300, 2, '#56c4d6', .8) + bar(80, 702, 230, 3, '#8fdce4', .7) + bar(671, 420, 2, 80, '#56c4d6', .7);
	art += '<path d="M-17 236Q-19 235 -19 240V265Q-19 269 -15 267L-8 260 3 260Q6 258 3 256z" fill="#4c5c64"/>';
	return `<defs><linearGradient id="left" x2="0" y2="1"><stop stop-color="#4bb4e0" stop-opacity="0"/><stop offset=".2" stop-color="#4bb4e0"/><stop offset=".7" stop-color="#4bb4e0"/><stop offset="1" stop-color="#4bb4e0" stop-opacity="0"/></linearGradient></defs>${art}`;
}

class WeekCalendar extends HTMLElement {
	constructor() {
		super();
		const days = [
			['19', '日', '大安', 'sun'], ['20', '月', '赤口', ''],
			['21', '火', '先負', 'today'], ['22', '水', '仏滅', '', '<time class="hour">18:0</time>'],
			['23', '木', '大安', 'pink'], ['24', '金', '赤口', '', '<span class="more">+2</span>'],
			['25', '土', '先勝', 'sat', '<span class="more">+1</span>'],
		];
		const mini = [['', '', '', 1, 2, 3, 4], [5, 6, 7, 8, 9, 10, 11], [12, 13, 14, 15, 16, 17, 18], [19, 20, 21, 22, 23, 24, 25], [26, 27, 28, 29, 30, 31, '']];
		shadow(this, `
			<style>
			:host {
				display: block;
				position: relative;
				border-radius: 60px;
				background: #f5f5f6;
				color: #484848;
			}
			.grid {
				display: grid;
				grid-template-columns: 1fr 1fr;
				grid-template-rows: repeat(4, 1fr);
				height: 100%;
				overflow: hidden;
				border-radius: 60px;
			}
			section { position: relative; border-bottom: 1px solid #999; }
			section:nth-child(odd) { border-right: 1px solid #999; }
			section:nth-child(n+7) { border-bottom: 0; }
			header {
				display: flex;
				align-items: center;
				gap: 12px;
				padding: 9px 24px 0 22px;
				font-size: 20px;
				line-height: 36px;
			}
			.num { font-size: 28px; color: #000; }
			.rest { margin-left: auto; font-size: 21px; }
			.sun .num, .sun .day { color: #ee2c1c; }
			.sat .num, .sat .day { color: #1a3cf0; }
			.pink { background: #f5d6d2; }
			.today .num {
				width: 36px;
				margin: 0 -4px;
				border-radius: 18px;
				background: #4577cc;
				color: #fff;
				text-align: center;
			}
			.hour { position: absolute; left: 26px; bottom: 28px; font-size: 21px; line-height: 28px; color: #777; }
			.more {
				position: absolute;
				right: 23px;
				bottom: 34px;
				padding: 0 6px;
				border-radius: 5px;
				background: #5d86cc;
				color: #fff;
				font-size: 17px;
				line-height: 22px;
			}
			.mini { padding: 12px 13px 0; }
			h3 { margin: 0; font-size: 19px; line-height: 26px; text-align: center; color: #000; }
			table { width: 100%; border-collapse: collapse; table-layout: fixed; }
			td { padding: 0; font-size: 17px; line-height: 23px; font-weight: 600; text-align: center; }
			td:first-child, .holiday { color: #ee2c1c; }
			td:last-child { color: #1a3cf0; }
			.now { font-weight: 800; }
			svg { position: absolute; left: 0; top: 0; width: 100%; height: 100%; overflow: visible; }
			</style>
			<div class="grid">
				${days.map(([num, day, rest, kind, extra = '']) => `<section class="${kind}"><header><span class="num">${num}</span><span class="day">${day}</span><span class="rest">${rest}</span></header>${extra}</section>`).join('')}
				<section class="mini">
					<h3>2025年10月</h3>
					<table>${mini.map(row => `<tr>${row.map(n => `<td class="${n === 13 ? 'holiday' : n === 21 ? 'now' : ''}">${n}</td>`).join('')}</tr>`).join('')}</table>
				</section>
			</div>
			<svg viewBox="0 0 711 711" aria-hidden="true">${weekMarks()}</svg>
		`);
	}
}
customElements.define('week-calendar', WeekCalendar);

/* ---------- day timeline ---------- */

function dayMarks() {
	let art = bar(104, 18, 262, 46, 'url(#cover)') + bar(104, 456, 206, 46, 'url(#cover)');
	for (const y of [7, 26, 45, 65]) {
		art += bar(102, y, 12, 8, '#ff00ff', .7) + bar(122, y, 17, 8, '#ff00ff', .8) + bar(143, y, 225, 8, 'url(#pink)');
		art += block(y + 300, 124, 300, [y + 4], '#ffe0ff', .7);
	}
	art += bar(95, 16, 245, 4, 'url(#sea)') + bar(180, 86, 160, 2, 'url(#rose)');
	art += block(305, 102, 200, [63, 82], '#555', .35);
	for (const y of [445, 464, 483, 503]) {
		art += bar(102, y, 12, 8, '#cf7ee8', .7) + bar(122, y, 17, 8, '#cf7ee8', .8) + bar(143, y, 160, 8, 'url(#mauve)');
		art += block(y, 124, 275, [y + 4], '#f6e4fc', .7);
	}
	art += block(309, 102, 248, [455], '#444', .55) + block(311, 102, 200, [501, 520], '#555', .4) + block(315, 124, 246, [437], '#777', .2);
	art += bar(200, 521, 210, 8, 'url(#blue)');
	art += block(313, 196, 405, [524, 543, 563, 582], '#ebebff', .7);
	art += bar(194, 535, 230, 3, 'url(#light)') + bar(194, 555, 240, 4, 'url(#light)');
	art += bar(217, 526, 4, 86, 'url(#drop)') + bar(196, 540, 4, 60, 'url(#drop)', .6);
	art += '<text x="194" y="554" font-size="17" fill="#fff">9</text>';
	const fade = (id, color) => `<linearGradient id="${id}"><stop offset=".7" stop-color="${color}"/><stop offset="1" stop-color="${color}" stop-opacity="0"/></linearGradient>`;
	return `<defs>${fade('cover', '#f5f5f6')}${fade('pink', '#ff00ff')}${fade('mauve', '#cf7ee8')}${fade('sea', '#48bfdc')}${fade('rose', '#f5b4b4')}${fade('blue', '#b4b4fa')}${fade('light', '#f4f4ff')}
		<linearGradient id="drop" x2="0" y2="1"><stop offset=".4" stop-color="#fff"/><stop offset="1" stop-color="#fff" stop-opacity="0"/></linearGradient></defs>${art}`;
}

class DayTimeline extends HTMLElement {
	constructor() {
		super();
		const hours = list => list.map(h => `<li><time>${h}:00</time><hr></li>`).join('');
		shadow(this, `
			<style>
			:host {
				display: flex;
				position: relative;
				border-radius: 60px;
				background: #f5f5f6;
				color: #777;
			}
			aside { width: 107px; padding-top: 25px; text-align: center; color: #555; font-size: 19px; line-height: 32px; }
			h2 { margin: 0; font-size: 64px; line-height: 70px; font-weight: 300; color: #000; }
			aside b { display: block; padding-top: 8px; font-size: 19px; line-height: 28px; color: #000; }
			main { flex: 1; padding: 23px 23px 0 0; }
			.event { margin-left: 79px; height: 34px; border-radius: 7px; background: #f0f; }
			.event.next { margin-top: 17px; height: 36px; background: #cc74e6; }
			ul { position: relative; margin: 15px 0 0; padding: 0; list-style: none; }
			.event.next + ul { margin-top: 13px; }
			li { display: flex; align-items: center; height: 42px; }
			time { width: 54px; font-size: 20px; text-align: right; }
			hr { flex: 1; margin: 0 0 0 25px; border: 0; border-top: 1px solid #888; }
			h3 { margin: 0; font-size: 21px; line-height: 37px; font-weight: 600; color: #484848; }
			.now { position: absolute; left: 79px; right: 0; top: 39px; height: 4px; background: #f0484c; }
			.now::before { content: ''; position: absolute; left: -13px; top: -5px; width: 14px; height: 14px; border-radius: 7px; background: #ff3b45; }
			.busy { position: absolute; left: 79px; right: 0; top: 22px; bottom: 22px; border-radius: 7px; background: #9b9bfe; }
			svg { position: absolute; left: 0; top: 0; width: 100%; height: 100%; }
			</style>
			<aside><h2>21</h2><b>火曜日</b>先負</aside>
			<main>
				<div class="event"></div>
				<ul>${hours([10, 11, 12, 13, 14, 15, 16, 17])}<div class="now"></div></ul>
				<h3>明日の予定</h3>
				<div class="event next"></div>
				<ul>${hours([9, 10, 11, 12])}<div class="busy"></div></ul>
			</main>
			<svg viewBox="0 0 711 711" aria-hidden="true">${dayMarks()}</svg>
		`);
	}
}
customElements.define('day-timeline', DayTimeline);

/* ---------- weather ---------- */

const CLOUD = 'M4 26Q0 26 0 22.500Q0 19 6 19Q7 13 13 13Q14 1 25 1Q34 1 36 10Q40 13 40 19Q40 26 33 26z';
const DROPS = '<path d="M9 31v2M17 31v2M25 31v2M33 31v2M6 39v2M14 39v2M22 39v2M30 39v2" stroke-width="4" stroke-linecap="round"/>';
const sun = (cx, cy, r, color = '#fff') => {
	let rays = '';
	for (let i = 0; i < 8; i++) rays += `<path d="M${cx} ${cy - r * 1.55}V${cy - r * 2}" transform="rotate(${i * 45} ${cx} ${cy})"/>`;
	return `<g fill="${color}" stroke="${color}" stroke-width="${r * .5}" stroke-linecap="round"><circle cx="${cx}" cy="${cy}" r="${r}" stroke="none"/>${rays}</g>`;
};

function chart() {
	const today = [18, 19, 19, 19, 19, 18, 18, 17, 17, 17, 16, 16, 15, 15, 15, 14, 14, 13, 13, 13, 13, 13, 14, 14];
	const before = [21.9, 23.3, 23.5, 22.8, 22.3, 22.4, 21.7, 20.6, 20, 19.1, 18.6, 18.3, 18, 17.7, 17.3, 17, 16.6, 16.3, 15.9, 15.5, 15.3, 15.5, 16.1, 17.2];
	const px = i => 47.5 + i * 26.84;
	const py = t => 14 + (24 - t) * 12.6;
	const line = list => list.map((t, i) => `${px(i).toFixed(1)},${py(t).toFixed(1)}`).join(' ');
	let art = '';
	for (let t = 24; t >= 12; t -= 2) art += `<path d="M34 ${py(t)}H${t === 24 || t === 12 ? 668 : 678}" stroke="#333" stroke-width="2"/>`;
	art += `<polyline points="${line(before)}" fill="none" stroke="#777" stroke-width="3" stroke-dasharray="4 4"/>`;
	art += `<polyline points="${line(today)}" fill="none" stroke="#a0a0a0" stroke-width="5"/>`;
	for (const [i, color, dy] of [[1, '#ff9a9a', 30], [17, '#6fd0f8', -15]]) {
		art += `<circle cx="${px(i)}" cy="${py(today[i])}" r="6" fill="${color}" stroke="#111" stroke-width="2"/>`;
		art += `<text x="${px(i)}" y="${py(today[i]) + dy}" font-size="22" fill="${color}" text-anchor="middle">${today[i]}</text>`;
	}
	art += `<g font-size="18" fill="#999"><text x="690" y="20" text-anchor="end">24</text><text x="690" y="171" text-anchor="end">12</text>`;
	for (let i = 0; i < 24; i++) {
		if (i % 3 !== 2) {
			art += `<circle cx="${px(i)}" cy="183" r="1.500"/>`;
			continue;
		}
		const hour = (i + 10) % 24;
		const rain = hour === 0 || hour === 3;
		art += `<text x="${px(i)}" y="190" text-anchor="middle">${hour}</text>`;
		art += `<g transform="translate(${px(i) - 18} ${rain ? 195 : 200}) scale(.92)" fill="${rain ? '#0a7aff' : '#999'}" stroke="${rain ? '#0a7aff' : 'none'}"><path d="${CLOUD}" stroke="none" transform="scale(1 ${rain ? .8 : 1})"/>${rain ? `<g transform="scale(1 .8)">${DROPS}</g>` : ''}</g>`;
	}
	return art + '</g>';
}

function forecast(kind) {
	const corner = color => `<path d="M52 21H86V49Q86 61 74 61H42z" fill="${color}" stroke="#111" stroke-width="1.500"/>`;
	const cloudLeft = `<path transform="translate(2 10) scale(1.100 1.250)" fill="#fff" d="${CLOUD}"/>`;
	const art = {
		cloud: `<path transform="translate(17 12) scale(1.300)" fill="#fff" d="${CLOUD}"/>`,
		sun: sun(43, 31, 10),
		rain: cloudLeft + corner('#0a76ff') + `<g transform="translate(53 24) scale(.68)" fill="#fff" stroke="#fff"><path d="${CLOUD}" stroke="none"/>${DROPS}</g>`,
		clear: cloudLeft + corner('#ff8200') + sun(67, 41, 8),
	}[kind];
	return `<svg viewBox="0 0 86 61" role="img" aria-label="${kind}" style="background:${kind === 'sun' ? '#ff8200' : '#9b9b9b'}">${art}</svg>`;
}

class WeatherCard extends HTMLElement {
	constructor() {
		super();
		const days = [
			['21(火)', 'cloud', 19, 15, 40], ['22(水)', 'rain', 17, 13, 40], ['23(木)', 'sun', 23, 14, 20],
			['24(金)', 'clear', 22, 14, 30], ['25(土)', 'rain', 21, 16, 60], ['26(日)', 'rain', 24, 18, 60],
		];
		shadow(this, `
			<style>
			:host {
				display: flex;
				flex-direction: column;
				border-radius: 60px;
				background: linear-gradient(#0e0e0e 60%, #1c1c1c);
				box-shadow: inset 0 0 0 1px #3c3c3c;
				color: #dcdcdc;
			}
			header { padding: 28px 30px 0; }
			h2 { display: flex; align-items: center; gap: 12px; margin: 0; font-size: 23px; line-height: 34px; font-weight: 600; }
			.temp { height: 60px; font-size: 60px; line-height: 60px; font-weight: 200; }
			.temp small { font-size: 42px; line-height: 42px; }
			.time { font-size: 22px; line-height: 32px; color: #8c8c8c; }
			.chart { display: block; margin-top: 36px; width: 100%; }
			.days { display: grid; grid-template-columns: repeat(6, 86px); justify-content: space-between; padding: 10px 32px 0; text-align: center; }
			.days svg { display: block; width: 86px; height: 61px; margin: 9px 0 10px; border-radius: 12px; }
			dl, dd, dt { margin: 0; white-space: nowrap; }
			dt { font-size: 22px; line-height: 36px; }
			dd { font-size: 22px; line-height: 36px; font-weight: 600; }
			dl:nth-child(5) dt { color: #7da2f4; }
			dl:nth-child(6) dt { color: #f4827f; }
			.high { color: #ff9c9c; }
			.low { color: #72d0f6; }
			.rain { color: #9a9a9a; font-weight: 500; }
			</style>
			<header>
				<h2>大阪市中央区大阪城 <svg width="25" height="24" viewBox="0 0 25 24" role="img" aria-label="current location"><path d="M23 1L1 11Q1 14 4 13L11 13 12 20Q12 24 14 22z" fill="#dcdcdc" stroke="#dcdcdc" stroke-width="2" stroke-linejoin="round"/></svg></h2>
				<div class="temp">18.0<small>°C</small></div>
				<div class="time">10:17</div>
			</header>
			<svg class="chart" viewBox="0 0 711 240" role="img" aria-label="temperature by the hour">${chart()}</svg>
			<div class="days">
				${days.map(([day, kind, high, low, rain]) => `<dl><dt>${day}</dt>${forecast(kind)}<dd class="high">${high}°C</dd><dd class="low">${low}°C</dd><dd class="rain">${rain}%</dd></dl>`).join('')}
			</div>
		`);
	}
}
customElements.define('weather-card', WeatherCard);

/* ---------- page dots and dock ---------- */

class PageDots extends HTMLElement {
	constructor() {
		super();
		shadow(this, `
			<style>
			:host { display: flex; flex: 1; align-items: center; justify-content: center; gap: 20px; }
			button { width: 16px; height: 16px; padding: 0; border: 0; border-radius: 8px; background: rgba(255,255,255,.45); }
			button:first-of-type { background: #fff; }
			</style>
			<button type="button" aria-label="Page 1"></button><button type="button" aria-label="Page 2"></button>
		`);
	}
}
customElements.define('page-dots', PageDots);

class AppLibrary extends HTMLElement {
	constructor() {
		super();
		shadow(this, `
			<style>
			:host { display: block; position: relative; }
			button, i {
				box-sizing: border-box;
				border: 1px solid #d6caff;
				border-radius: 31px;
				background: #ae99fa;
			}
			button {
				position: relative;
				display: grid;
				grid-template-columns: 1fr 1fr;
				gap: 9px;
				align-content: center;
				width: 100%;
				height: 100%;
				padding: 15px;
			}
			i { position: absolute; top: 8px; bottom: 8px; left: -7px; width: 90px; background: #8f78e4; }
			i:first-of-type { top: 15px; bottom: 15px; left: -14px; background: #7f68d8; }
			</style>
			<i></i><i></i>
			<button type="button" aria-label="App Library"><app-icon name="notion"></app-icon><app-icon name="arc"></app-icon><app-icon name="gemini"></app-icon><app-icon name="lightroom"></app-icon></button>
		`);
	}
}
customElements.define('app-library', AppLibrary);

class DockBar extends HTMLElement {
	constructor() {
		super();
		const main = ['arc', 'x', 'photos', 'lightroom', 'meetup', 'slope', 'bolt', 'phone', 'lock', 'keys', 'appstore', 'files', 'settings'];
		const recent = ['gemini', 'gmaildock', 'notion'];
		const button = name => `<button type="button" aria-label="${name}"><app-icon glass name="${name}"></app-icon></button>`;
		shadow(this, `
			<style>
			:host {
				display: flex;
				align-items: center;
				justify-content: space-between;
				box-sizing: border-box;
				height: 188px;
				margin: 0 23px 16px 26px;
				padding: 0 32px 0 31px;
				border-radius: 74px;
				border: 1px solid rgba(170,160,240,.6);
				border-width: 2px 1px;
				background: rgba(160,150,215,.34);
				backdrop-filter: blur(10px);
			}
			button { width: 119px; padding: 0; border: 0; background: none; }
			hr { width: 2px; height: 124px; margin: 0; border: 0; background: rgba(190,180,245,.6); }
			app-library { width: 119px; height: 119px; }
			</style>
			${main.map(button).join('')}<hr>${recent.map(button).join('')}<hr><app-library></app-library>
		`);
	}
}
customElements.define('dock-bar', DockBar);

/* ---------- the screen ---------- */

class HomeScreen extends HTMLElement {
	constructor() {
		super();
		shadow(this, `
			<style>
			:host { display: flex; flex-direction: column; position: relative; min-height: 100%; }
			status-bar, .widgets, page-dots, dock-bar { position: relative; }
			.widgets {
				display: grid;
				grid-template-columns: repeat(3, 1fr);
				gap: 73px 79px;
				padding: 92px 229px 0 230px;
			}
			.widgets > * { min-width: 0; }
			app-folder, week-calendar, day-timeline, weather-card { aspect-ratio: 1; }
			month-calendar { grid-column: span 2; margin: 0 3px 0 2px; }
			</style>
			<wall-paper></wall-paper>
			<status-bar></status-bar>
			<div class="widgets">
				<month-calendar></month-calendar>
				<app-folder></app-folder>
				<week-calendar></week-calendar>
				<day-timeline></day-timeline>
				<weather-card></weather-card>
			</div>
			<page-dots></page-dots>
			<dock-bar></dock-bar>
		`);
	}
}
customElements.define('home-screen', HomeScreen);
</script>
</body>
</html>
